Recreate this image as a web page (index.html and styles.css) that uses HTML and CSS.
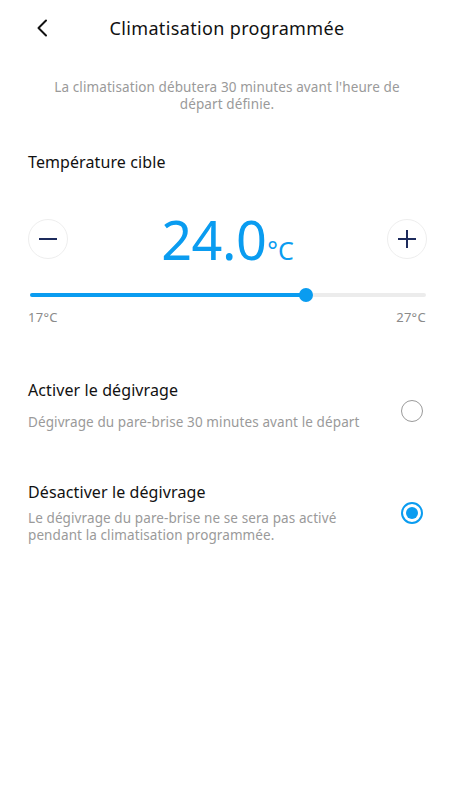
FILE: index.html
```html
<!DOCTYPE html>
<html lang="fr">
<head>
<meta charset="utf-8">
<link rel="stylesheet" href="styles.css">
</head>
<body>
<div class="screen">
  <header class="topbar">
    <svg class="back" width="12" height="18" viewBox="0 0 12 18"><path d="M10 1.5 L2.5 9 L10 16.5" fill="none" stroke="#111" stroke-width="2" stroke-linecap="round" stroke-linejoin="round"/></svg>
    <h1 class="title">Climatisation programmée</h1>
  </header>
  <p class="intro">La climatisation débutera 30 minutes avant l'heure de<br>départ définie.</p>
  <h2 class="section">Température cible</h2>
  <div class="temp-row">
    <button class="round-btn" aria-label="moins">
      <svg width="22" height="22" viewBox="0 0 22 22"><path d="M2 11 H20" stroke="#1d2b5c" stroke-width="2"/></svg>
    </button>
    <div class="temp"><span class="value">24.0</span><span class="unit">°C</span></div>
    <button class="round-btn" aria-label="plus">
      <svg width="22" height="22" viewBox="0 0 22 22"><path d="M2 11 H20 M11 2 V20" stroke="#1d2b5c" stroke-width="2"/></svg>
    </button>
  </div>
  <div class="slider">
    <div class="track"><div class="fill" style="width:69.7%"><span class="knob"></span></div></div>
  </div>
  <div class="range"><span>17°C</span><span>27°C</span></div>
  <div class="option first">
    <div class="opt-text">
      <div class="opt-title">Activer le dégivrage</div>
      <div class="opt-desc">Dégivrage du pare-brise 30 minutes avant le départ</div>
    </div>
    <span class="radio"></span>
  </div>
  <div class="option second">
    <div class="opt-text">
      <div class="opt-title">Désactiver le dégivrage</div>
      <div class="opt-desc">Le dégivrage du pare-brise ne se sera pas activé<br>pendant la climatisation programmée.</div>
    </div>
    <span class="radio on"></span>
  </div>
</div>
</body>
</html>
```
FILE: styles.css
```css
* { box-sizing: border-box; }
html, body { margin: 0; background: #fff; }
body { font-family: "Noto Sans", "Open Sans", sans-serif; color: #111; }
.screen { width: 456px; min-height: 800px; padding: 0 30px 0 28px; }
.topbar { height: 56px; display: flex; align-items: center; justify-content: center; position: relative; }
.back { position: absolute; left: 8px; top: 19px; }
.title { margin: 0; font-size: 18px; font-weight: 400; letter-spacing: 0.35px; }
.intro { margin: 23px 0 0; text-align: center; color: #9a9a9a; font-size: 13.5px; line-height: 17px; letter-spacing: 0.1px; }
.section { margin: 39px 0 0; font-size: 16px; font-weight: 400; line-height: 20px; letter-spacing: 0.1px; }
.temp-row { margin-top: 39px; display: flex; align-items: center; justify-content: space-between; }
.round-btn { width: 40px; height: 40px; border-radius: 50%; border: 1px solid #eeeeee; background: #fff; padding: 0; display: flex; align-items: center; justify-content: center; }
.round-btn:last-child { margin-right: -1px; }
.temp { color: #0a9cf0; display: flex; align-items: baseline; margin-left: 0; }
.value { font-size: 54px; line-height: 56px; letter-spacing: -0.5px; }
.unit { font-size: 25px; margin-left: 1px; }
.slider { margin-top: 26px; padding: 0 0 0 2px; }
.track { height: 4px; background: #ececec; border-radius: 2px; }
.fill { height: 4px; background: #0a9cf0; border-radius: 2px; position: relative; }
.knob { position: absolute; right: -7px; top: -5px; width: 14px; height: 14px; border-radius: 50%; background: #0a9cf0; }
.range { display: flex; justify-content: space-between; margin-top: 12px; font-size: 13px; color: #8a8a8a; line-height: 16px; letter-spacing: 0.3px; }
.option { display: flex; align-items: center; justify-content: space-between; margin-top: 55px; }
.option.second { margin-top: 51px; }
.opt-title { font-size: 16px; line-height: 20px; letter-spacing: 0.1px; }
.opt-desc { margin-top: 14px; font-size: 13.5px; line-height: 17px; color: #9a9a9a; letter-spacing: 0.1px; }
.second .opt-desc { margin-top: 8px; }
.radio { width: 22px; height: 22px; border-radius: 50%; border: 1.6px solid #9a9a9a; flex: none; margin-right: 3px; position: relative; }
.first .radio { margin-top: 10px; }
.radio.on { border: 2px solid #0a9cf0; }
.radio.on::after { content: ""; position: absolute; left: 3px; top: 3px; width: 12px; height: 12px; border-radius: 50%; background: #0a9cf0; }
```
